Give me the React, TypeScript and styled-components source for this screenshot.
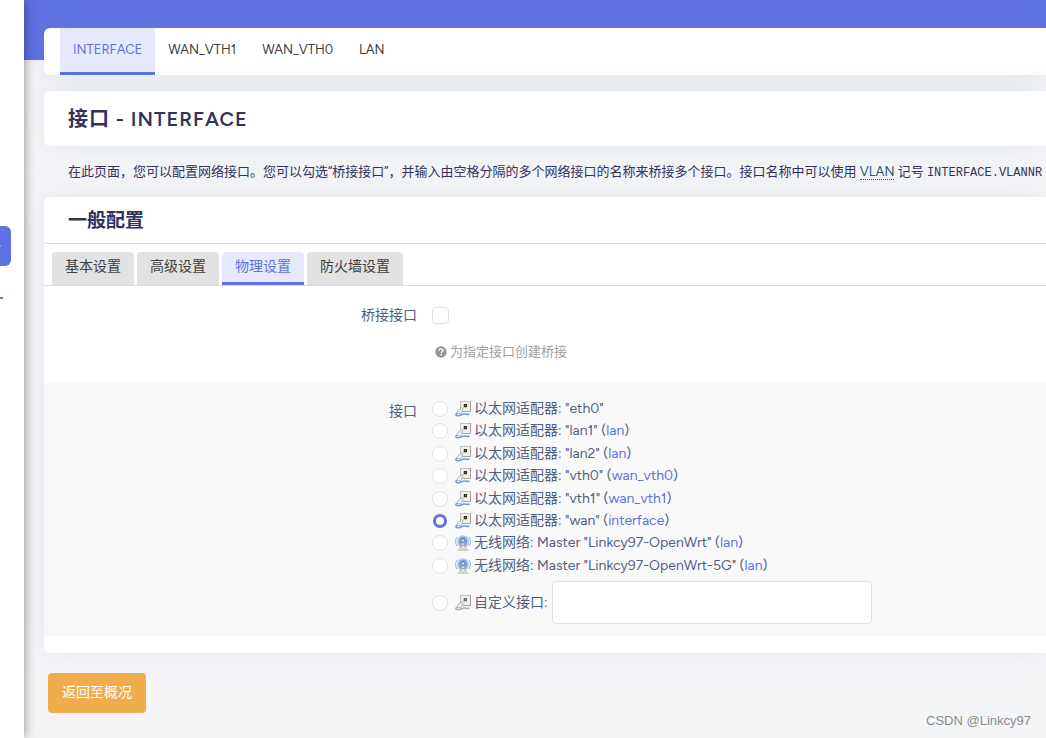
import React from "react";
import styled, { createGlobalStyle, css } from "styled-components";

const sans = '"Figtree", "Inter", "Noto Sans CJK SC", sans-serif';
const indigo = "#5e72e4";

const GlobalStyle = createGlobalStyle`
  *, *::before, *::after { box-sizing: border-box; }
  body {
    margin: 0;
    background: #f4f5f7;
    color: #525f7f;
    font-family: ${sans};
    font-size: 14px;
    overflow-x: hidden;
  }
  h2, h3, p, ul { margin: 0; padding: 0; }
  ul { list-style: none; }
  a { color: ${indigo}; text-decoration: none; }
`;

const Page = styled.div`
  position: relative;
  display: flex;
  min-height: 100vh;
  overflow: hidden;
`;

const Sidebar = styled.nav`
  position: relative;
  z-index: 1;
  flex: 0 0 24px;
  padding-top: 226px;
  background: #fff;
  box-shadow: 0 0 12px rgba(0, 0, 0, 0.45);
`;

const SidebarLink = styled.a`
  display: flex;
  align-items: center;
  width: 11px;
  height: 40px;
  border-radius: 0 6px 6px 0;
  background: ${indigo};
`;

const SidebarMark = styled.div`
  width: 3px;
  height: 2px;
  margin-top: 31px;
  background: ${indigo};
`;

const Main = styled.main`
  flex: 1;
  min-width: 0;
`;

const Header = styled.header`
  height: 60px;
  background: ${indigo};
`;

const Content = styled.div`
  margin-top: -32px;
  padding-left: 20px;
`;

const cardLook = css`
  background: #fff;
  border-radius: 6px 0 0 6px;
  box-shadow: 0 0 32px rgba(136, 152, 170, 0.15);
`;

const TopTabs = styled.ul`
  ${cardLook}
  display: flex;
  height: 47px;
  padding-left: 16px;
`;

const TopTab = styled.a<{ $active?: boolean }>`
  display: block;
  height: 47px;
  padding: 0 13px;
  font-size: 13px;
  line-height: 43px;
  color: ${(p) => (p.$active ? indigo : "#404040")};
  background: ${(p) => (p.$active ? "#e6e9fb" : "transparent")};
  border-bottom: 3px solid ${(p) => (p.$active ? indigo : "transparent")};
`;

const TitleCard = styled.div`
  ${cardLook}
  margin-top: 16px;
  padding: 13px 24px 11px;
`;

const Title = styled.h2`
  font-size: 20px;
  font-weight: 600;
  line-height: 31px;
  letter-spacing: 1px;
  color: #32325d;
`;

const Description = styled.p`
  padding: 15px 0 13px 24px;
  font-size: 13px;
  line-height: 22px;
  white-space: nowrap;
  color: #32325d;

  abbr {
    color: #1c5a78;
    text-decoration: none;
    border-bottom: 1px dotted #1c5a78;
  }
  code {
    font-family: "Liberation Mono", monospace;
    font-size: 12px;
  }
`;

const Panel = styled.section`
  ${cardLook}
  padding-bottom: 17px;
`;

const PanelTitle = styled.h3`
  padding: 2px 24px 0;
  border-bottom: 1px solid #dddddd;
  font-size: 19px;
  font-weight: 700;
  line-height: 44px;
  color: #32325d;
`;

const SubTabs = styled.ul`
  display: flex;
  gap: 3px;
  padding: 8px 8px 0;
  border-bottom: 1px solid #dddddd;
`;

const SubTab = styled.a<{ $active?: boolean }>`
  display: block;
  height: 33px;
  padding: 0 13px;
  border-radius: 4px 4px 0 0;
  line-height: 30px;
  color: ${(p) => (p.$active ? indigo : "#404040")};
  background: ${(p) => (p.$active ? "#e6e9fb" : "#e2e2e2")};
  border-bottom: 3px solid ${(p) => (p.$active ? indigo : "#e2e2e2")};
`;

const FormRow = styled.div<{ $shaded?: boolean }>`
  display: grid;
  grid-template-columns: 373px 1fr;
  column-gap: 15px;
  padding: ${(p) => (p.$shaded ? "15px 0 12px" : "16px 0 20px")};
  background: ${(p) => (p.$shaded ? "#f9f9f9" : "#fff")};
`;

const FieldName = styled.label`
  text-align: right;
  line-height: 28px;
`;

const Checkbox = styled.input`
  display: block;
  appearance: none;
  width: 17px;
  height: 17px;
  margin: 5px 0 0;
  border: 1px solid #dee2e6;
  border-radius: 4px;
  background: #fff;
`;

const Help = styled.p`
  display: flex;
  align-items: center;
  gap: 3px;
  margin-top: 16px;
  padding-left: 3px;
  font-size: 13px;
  line-height: 23px;
  color: #a0a0a0;
`;

const Choices = styled.ul`
  display: grid;
  grid-auto-rows: 1fr;
  min-height: 179px;
`;

const Choice = styled.label`
  display: flex;
  align-items: center;
  height: 22px;
  line-height: 22px;
  white-space: pre;

  svg { margin: 0 3px 0 7px; }
`;

const CustomChoice = styled.div`
  display: flex;
  align-items: center;
  gap: 4px;
  margin-top: 4px;
`;

const Radio = styled.input`
  appearance: none;
  width: 16px;
  height: 16px;
  margin: 0;
  border: 1px solid #dee2e6;
  border-radius: 50%;
  background: #fff;

  &:checked {
    border: 3px solid ${indigo};
    width: 14px;
    height: 14px;
    margin: 0 1px;
  }
`;

const TextInput = styled.input`
  width: 320px;
  height: 43px;
  padding: 0 12px;
  border: 1px solid #dee2e6;
  border-radius: 4px;
  background: #fff;
  font: inherit;
  color: inherit;
`;

const BackButton = styled.button`
  height: 40px;
  margin: 20px 4px;
  padding: 0 14px 4px;
  border: 0;
  border-radius: 4px;
  background: #f0ad4e;
  color: #fff;
  font-family: inherit;
  font-size: 14px;
`;

const Watermark = styled.div`
  position: absolute;
  right: 15px;
  bottom: 8px;
  font-family: "Liberation Sans", "Noto Sans CJK SC", sans-serif;
  font-size: 13px;
  line-height: 18px;
  color: #8b8c8e;
`;

const EthernetIcon = ({ muted }: { muted?: boolean }) => (
  <svg width="16" height="16" viewBox="0 0 16 16" aria-hidden="true">
    <rect x="5.500" y="0.500" width="10" height="10" fill="#f0f0ec" stroke="#c2c2bc" />
    <path d="M15.500 0v10.500H8" fill="none" stroke="#a3a39c" />
    <rect x="8" y="3" width="4" height="4" fill={muted ? "#c4c4c4" : "#c4c2a8"} />
    <rect x="9" y="3" width="3" height="3" fill={muted ? "#6a6a6a" : "#2b2c1c"} />
    <rect x="10" y="4" width="1" height="1" fill={muted ? "#999" : "#8a8840"} />
    <path d="M2 12.500l1-3 2.500-1.500 2 2-1.500 2.500z" fill="#f1f1ef" stroke="#a4a4a0" strokeWidth="0.700" />
    <path d="M5 8l1.300-1.500L8 8 7 9.600" fill="#fafafa" stroke="#8a8a86" strokeWidth="0.700" />
    <path
      d="M2 12c-2 1.600-.8 2.900 1.200 2.700 2.800-.3 3.800-1.500 6-1.700 2-.2 2.800.9 5.300.1"
      fill="none"
      stroke={muted ? "#adadad" : "#749fd0"}
      strokeWidth="1.600"
    />
  </svg>
);

const WirelessIcon = () => (
  <svg width="16" height="16" viewBox="0 0 16 16" aria-hidden="true">
    <circle cx="8" cy="6.500" r="6.300" fill="#b3cdea" />
    <circle cx="8" cy="6.500" r="4.800" fill="#77a5d8" />
    <path
      d="M2 2c-2 3-2 6 0 9M14 2c2 3 2 6 0 9"
      fill="none"
      stroke="#8fb2da"
      strokeWidth="1"
    />
    <path
      d="M4 3.500c-1.500 2-1.500 4 0 6M12 3.500c1.500 2 1.500 4 0 6"
      fill="none"
      stroke="#d3e3f4"
      strokeWidth="0.800"
    />
    <path d="M8 5L4 14h8z" fill="#e2e4e6" />
    <path d="M7.700 6.500L5 14M8.300 6.500L11 14M6.500 10.500h3" fill="none" stroke="#7f8389" strokeWidth="0.700" />
    <circle cx="8" cy="5.500" r="1.600" fill="#f4f4f4" stroke="#5f6875" strokeWidth="0.800" />
    <path d="M2.500 14.500h11v1h-11z" fill="#a5a5a1" />
    <path d="M4.500 13h7v1.500h-7z" fill="#d6d6d2" />
  </svg>
);

const HelpIcon = () => (
  <svg width="12" height="12" viewBox="0 0 12 12" aria-hidden="true">
    <circle cx="6" cy="6" r="5.700" fill="#959595" />
    <path
      d="M4.200 4.700c0-1.200.8-1.800 1.900-1.800 1.200 0 1.900.7 1.900 1.600 0 1.200-1.700 1.300-1.700 2.400"
      fill="none"
      stroke="#fff"
      strokeWidth="1.400"
    />
    <rect x="5.500" y="7.900" width="1.500" height="1.400" fill="#fff" />
  </svg>
);

const topTabs = ["INTERFACE", "WAN_VTH1", "WAN_VTH0", "LAN"];
const subTabs = ["基本设置", "高级设置", "物理设置", "防火墙设置"];

interface Device {
  name: string;
  network?: string;
  wireless?: boolean;
}

const devices: Device[] = [
  { name: "eth0" },
  { name: "lan1", network: "lan" },
  { name: "lan2", network: "lan" },
  { name: "vth0", network: "wan_vth0" },
  { name: "vth1", network: "wan_vth1" },
  { name: "wan", network: "interface" },
  { name: "Linkcy97-OpenWrt", network: "lan", wireless: true },
  { name: "Linkcy97-OpenWrt-5G", network: "lan", wireless: true },
];

export default function App() {
  return (
    <>
      <GlobalStyle />
      <Page>
        <Sidebar>
          <SidebarLink href="#network" aria-label="网络">
            <svg width="2" height="4" viewBox="0 0 2 4" aria-hidden="true">
              <path d="M0 1l1 1-1 1" fill="none" stroke="#8b9aec" />
            </svg>
          </SidebarLink>
          <SidebarMark />
        </Sidebar>
        <Main>
          <Header />
          <Content>
            <TopTabs>
              {topTabs.map((tab, i) => (
                <li key={tab}>
                  <TopTab href={`#${tab}`} $active={i === 0}>
                    {tab}
                  </TopTab>
                </li>
              ))}
            </TopTabs>
            <TitleCard>
              <Title>接口 - INTERFACE</Title>
            </TitleCard>
            <Description>
              在此页面，您可以配置网络接口。您可以勾选“桥接接口”，并输入由空格分隔的多个网络接口的名称来桥接多个接口。接口名称中可以使用{" "}
              <abbr>VLAN</abbr> 记号 <code>INTERFACE.VLANNR</code>
            </Description>
            <Panel>
              <PanelTitle>一般配置</PanelTitle>
              <SubTabs>
                {subTabs.map((tab, i) => (
                  <li key={tab}>
                    <SubTab href={`#${tab}`} $active={i === 2}>
                      {tab}
                    </SubTab>
                  </li>
                ))}
              </SubTabs>
              <FormRow>
                <FieldName htmlFor="bridge">桥接接口</FieldName>
                <div>
                  <Checkbox type="checkbox" id="bridge" />
                  <Help>
                    <HelpIcon />
                    为指定接口创建桥接
                  </Help>
                </div>
              </FormRow>
              <FormRow $shaded role="radiogroup" aria-labelledby="device-name">
                <FieldName as="span" id="device-name">
                  接口
                </FieldName>
                <div>
                  <Choices>
                    {devices.map((d) => (
                      <li key={d.name}>
                        <Choice>
                          <Radio type="radio" name="device" defaultChecked={d.name === "wan"} />
                          {d.wireless ? <WirelessIcon /> : <EthernetIcon />}
                          <span>
                            {d.wireless ? "无线网络: Master " : "以太网适配器: "}
                            {`"${d.name}"`}
                            {d.network && (
                              <>
                                {" ("}
                                <a href={`#${d.network}`}>{d.network}</a>)
                              </>
                            )}
                          </span>
                        </Choice>
                      </li>
                    ))}
                  </Choices>
                  <CustomChoice>
                    <Choice>
                      <Radio type="radio" name="device" />
                      <EthernetIcon muted />
                      <span>自定义接口:</span>
                    </Choice>
                    <TextInput type="text" aria-label="自定义接口" />
                  </CustomChoice>
                </div>
              </FormRow>
            </Panel>
            <BackButton type="button">返回至概况</BackButton>
          </Content>
        </Main>
        <Watermark>CSDN @Linkcy97</Watermark>
      </Page>
    </>
  );
}
